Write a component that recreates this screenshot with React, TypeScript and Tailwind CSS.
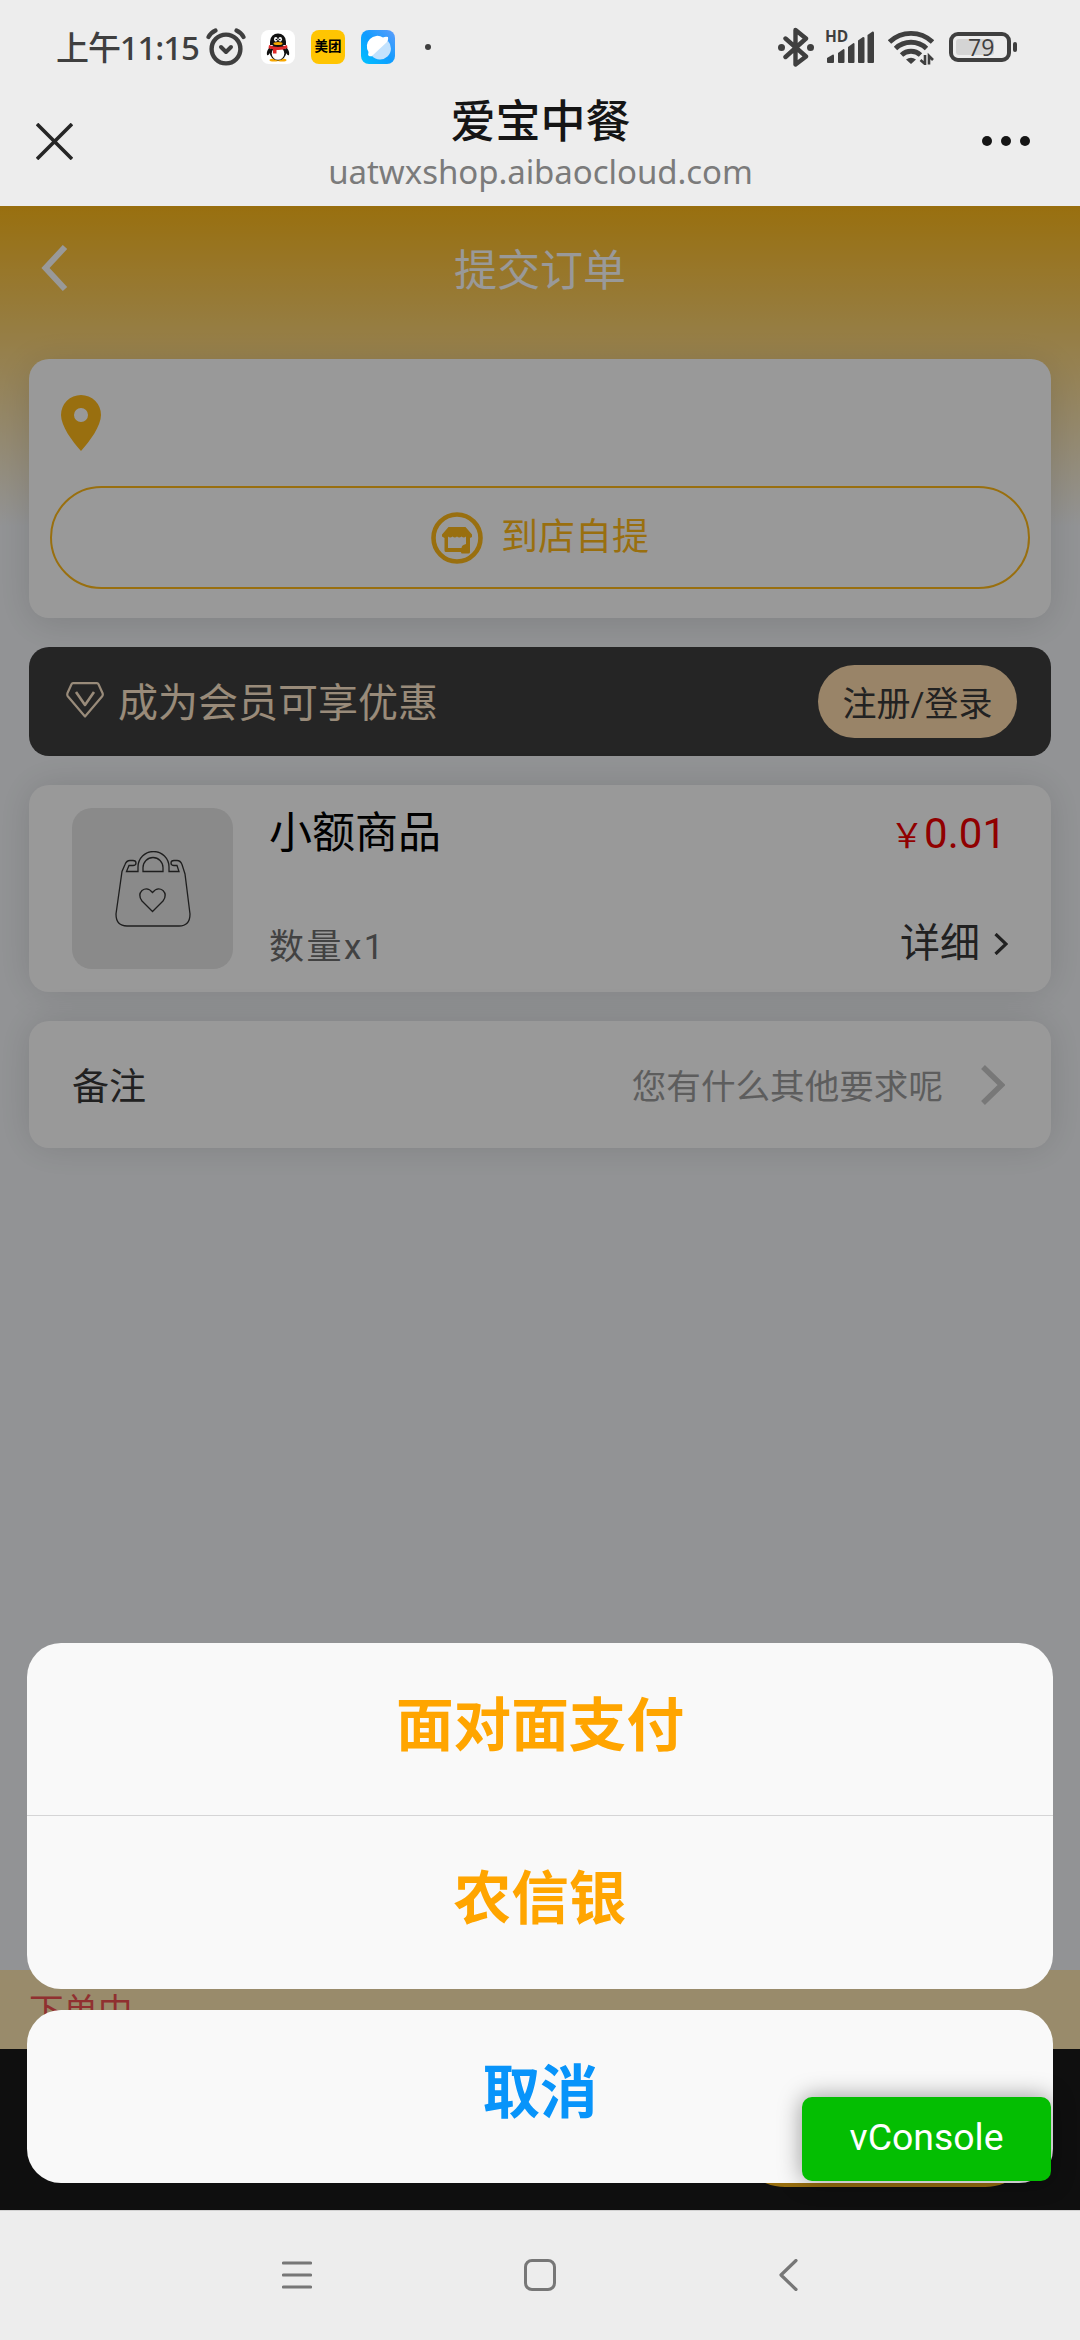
import React from "react";

const Alarm = () => (
  <svg className="w-10 h-[38px]" viewBox="0 0 40 38" fill="none" stroke="#3f3f3f" strokeLinecap="round">
    <circle cx="20" cy="21" r="14.4" strokeWidth="4.4" />
    <path d="M15 19l5 5 5-5" strokeWidth="4" strokeLinejoin="round" />
    <path d="M2.500 9Q5 4.500 9.500 2.500M37.500 9Q35 4.500 30.500 2.500" strokeWidth="4.2" />
  </svg>
);

const Penguin = () => (
  <svg className="w-[34px] h-[34px]" viewBox="0 0 34 34">
    <rect width="34" height="34" rx="8" fill="#fff" />
    <ellipse cx="13" cy="30" rx="4.500" ry="1.600" fill="#f7a800" />
    <ellipse cx="21" cy="30" rx="4.500" ry="1.600" fill="#f7a800" />
    <path d="M9 17q-4 4-3 8 1 1 3-2zM25 17q4 4 3 8-1 1-3-2z" fill="#111" />
    <ellipse cx="17" cy="22" rx="8.300" ry="8.500" fill="#111" />
    <ellipse cx="17" cy="23.500" rx="6.300" ry="6.300" fill="#fff" />
    <path d="M9 15V11.500a8 8 0 0 1 16 0V15z" fill="#111" />
    <ellipse cx="14.800" cy="9.300" rx="1.800" ry="2.400" fill="#fff" />
    <ellipse cx="19.200" cy="9.300" rx="1.800" ry="2.400" fill="#fff" />
    <circle cx="15.300" cy="9.500" r=".8" />
    <circle cx="18.800" cy="9.500" r=".8" />
    <ellipse cx="17" cy="13.600" rx="4.500" ry="1.500" fill="#f7a800" />
    <path d="M8 15q9 4 18 0l.5 3q-5 2.500-11 2v3.500h-3.500v-4.200l-4.500-1z" fill="#e02a2a" />
  </svg>
);

const Browser = () => (
  <svg className="w-[34px] h-[34px]" viewBox="0 0 34 34">
    <defs>
      <linearGradient id="browser" x1="0" y1="1" x2="1" y2="0">
        <stop offset="0" stopColor="#00c3ff" />
        <stop offset=".5" stopColor="#109cff" />
        <stop offset="1" stopColor="#5f9dfb" />
      </linearGradient>
    </defs>
    <rect width="34" height="34" rx="8" fill="url(#browser)" />
    <path d="M27 7q-3-.5-5 .5A10.500 10.500 0 0 0 7.500 22q-1 3 .5 4 2 .8 4-.2A10.500 10.500 0 0 0 26.500 12q1-3 .5-5z" fill="#fff" />
    <path d="M27 11A10.500 10.500 0 0 1 11 26z" fill="#c3e2fd" />
  </svg>
);

const Bluetooth = () => (
  <svg className="w-9 h-10" viewBox="0 0 36 40" fill="none" stroke="#3f3f3f" strokeWidth="4.400" strokeLinecap="round" strokeLinejoin="round">
    <path d="M7.500 11.500L28 29.500 17.500 37.500V3L28 11.500 7.500 30" />
    <circle cx="3.500" cy="20.500" r="3.500" fill="#3f3f3f" stroke="none" />
    <circle cx="32.500" cy="20.500" r="3.500" fill="#3f3f3f" stroke="none" />
  </svg>
);

const Signal = () => (
  <div className="relative w-[50px] h-[34px]">
    <span className="absolute left-0 -top-[2px] text-[15.5px] leading-[17px] font-bold font-['Open_Sans',sans-serif] text-[#3f3f3f]">HD</span>
    <svg className="w-[50px] h-[34px]" viewBox="0 0 50 34" fill="#3f3f3f">
      <path d="M2 28l6-3.500q1 0 1 1V32q0 1-1 1H3q-1 0-1-1z" />
      <path d="M13 23l5.500-4q1 0 1 1V32q0 1-1 1H14q-1 0-1-1z" />
      <path d="M23 17l5.500-4q1 0 1 1V32q0 1-1 1H24q-1 0-1-1z" />
      <path d="M33 10.500l5-3.500q1.500 0 1.500 1V32q0 1-1 1H34q-1 0-1-1z" />
      <path d="M42.500 5l5-3.500q1.500 0 1.500 1V32q0 1-1 1h-4.500q-1 0-1-1z" />
    </svg>
  </div>
);

const Wifi = () => (
  <svg className="w-[46px] h-9" viewBox="0 0 46 36" fill="none" stroke="#3f3f3f" strokeWidth="4.900">
    <path d="M1.500 13a31 31 0 0 1 43 0" />
    <path d="M7.500 19.500a22.500 22.500 0 0 1 31 0" />
    <path d="M13.500 26a14 14 0 0 1 19 0" />
    <path d="M18 30.500q5-3.500 10 0L23 35z" fill="#3f3f3f" stroke="none" />
    <path d="M37.200 26v9.500l-5-4.500M40.800 35.500V26.500l4.500 4.500" stroke="#ededed" strokeWidth="5" />
    <path d="M37 26v9l-4.500-4M41 35.500V27l4 4" strokeWidth="2.600" />
  </svg>
);

const Battery = () => (
  <div className="flex items-center gap-[2px]">
    <div className="w-[62px] h-[30px] border-4 border-[#3f3f3f] rounded-[9px] p-[3px] bg-[#ededed]">
      <div className="w-[38px] h-4 rounded-[3px] bg-[#d4d4d4] text-center">
        <span className="block pl-3 text-[23px] leading-4 font-medium font-['Open_Sans',sans-serif] text-[#3f3f3f]">79</span>
      </div>
    </div>
    <div className="w-1 h-[10px] rounded-full bg-[#3f3f3f]" />
  </div>
);

const StatusBar = () => (
  <div className="h-[94px] flex items-center pl-[56px] pr-[63px]">
    <span className="w-[150px] whitespace-nowrap text-[33px] leading-none tracking-[-1.1px] font-medium text-[#3f3f3f] font-['Noto_Sans','Noto_Sans_CJK_SC',sans-serif]">
      上午11:15
    </span>
    <Alarm />
    <div className="flex items-center gap-4 ml-[15px]">
      <Penguin />
      <div className="w-[34px] h-[34px] rounded-lg bg-[#ffc502] flex items-center justify-center text-[13.5px] leading-none font-bold text-black">
        美团
      </div>
      <Browser />
    </div>
    <div className="w-[6px] h-[6px] ml-[30px] rounded-full bg-[#3f3f3f]" />
    <div className="flex items-center ml-auto">
      <Bluetooth />
      <div className="ml-[11px]">
        <Signal />
      </div>
      <div className="ml-[13px]">
        <Wifi />
      </div>
      <div className="ml-[15px]">
        <Battery />
      </div>
    </div>
  </div>
);

const TitleBar = () => (
  <div className="h-28 px-9 flex items-center justify-between">
    <svg className="w-[37px] h-[37px] mb-[18px]" viewBox="0 0 37 37" stroke="#262626" strokeWidth="3.600">
      <path d="M1 1l35 35M36 1L1 36" />
    </svg>
    <div className="flex flex-col items-center pb-[4px]">
      <h1 className="text-[45px] leading-[52px] font-medium text-[#151515]">爱宝中餐</h1>
      <p className="h-[50px] text-[33px] leading-[46px] tracking-[-0.05px] text-[#7b7b7b] font-['Noto_Sans',sans-serif]">
        uatwxshop.aibaocloud.com
      </p>
    </div>
    <div className="flex gap-[9px] mr-[14px] mb-[18px] -ml-[26px]">
      <i className="w-[10px] h-[10px] rounded-full bg-[#151515]" />
      <i className="w-[10px] h-[10px] rounded-full bg-[#151515]" />
      <i className="w-[10px] h-[10px] rounded-full bg-[#151515]" />
    </div>
  </div>
);

const StoreIcon = () => (
  <svg className="w-[52px] h-[52px]" viewBox="0 0 52 52">
    <circle cx="26" cy="26" r="23.500" fill="none" stroke="#ffba19" strokeWidth="4.600" />
    <path
      fillRule="evenodd"
      fill="#ffba19"
      d="M17.500 15h17L41 22.500v2.500l-2 1v14q0 1.500-1.500 1.500H31q-1 0-1-1.500H15q-1.500 0-1.500-1.500V26l-2.500-1.500v-2zM17 24.500V36h13.500q0-3 4.500-4V24.500q-2.200 1.800-4.500 0-2.200 1.800-4.500 0-2.200 1.800-4.500 0-2.200 1.800-4.500 0z"
    />
  </svg>
);

const PickupCard = () => (
  <section className="h-[259px] rounded-[20px] bg-white pt-9 px-[21px] shadow-[0_6px_36px_rgba(0,0,0,0.12)]">
    <svg className="w-10 h-14 ml-[11px]" viewBox="0 0 40 56" fill="#ffba19">
      <path
        fillRule="evenodd"
        d="M20 0a20 20 0 0 1 20 20C40 31 29 46 20 56 11 46 0 31 0 20A20 20 0 0 1 20 0zm0 13a7 7 0 1 0 0 14 7 7 0 0 0 0-14z"
      />
    </svg>
    <button className="mt-[35px] w-full h-[103px] rounded-full border-2 border-[#ffba19] flex items-center justify-center gap-[18px]">
      <StoreIcon />
      <span className="text-[37px] leading-none text-[#ffba19]">到店自提</span>
    </button>
  </section>
);

const MemberBar = () => (
  <section className="h-[109px] mt-[29px] rounded-[20px] bg-[#3e3e3e] flex items-center pl-[37px] pr-[34px]">
    <svg className="w-[38px] h-9 mb-1" viewBox="0 0 38 36" fill="none" stroke="#ffe8cb" strokeWidth="2.200" strokeLinejoin="round">
      <path d="M7 1.200h24q1 0 1.500 1L36.500 11q.8 2-.5 3.500L19 34.500 2 14.500Q.8 13 1.500 11L5.500 2.200q.5-1 1.500-1z" />
      <path d="M10 10l9 13 9-13" strokeWidth="2.600" />
    </svg>
    <span className="ml-[14px] pt-[5px] text-[40px] leading-none text-[#ffe8cb]">成为会员可享优惠</span>
    <button className="ml-auto w-[199px] h-[73px] rounded-full bg-[#ffdcad] text-[34px] leading-none text-[#3a3a3a] pt-[5px]">
      注册/登录
    </button>
  </section>
);

const Bag = () => (
  <svg className="w-[76px] h-[76px]" viewBox="0 0 76 76" fill="none" stroke="#333" strokeWidth="1.300">
    <path d="M23 20.500V16a15.500 15.500 0 0 1 31 0v4.500h10l-2-6h-3q-3 0-3-2.500T59 9.500h3q3.500 0 5 4l3 9.500 5 40q0 12-11 12H12Q1 75 1 63L7 20.500l3-7q1.500-4 5-4h3q3 0 3 2.500t-3 2.500h-4l-2.500 6z" />
    <path d="M28 20.500V16.500a10 10 0 0 1 20 0v4z" />
    <path d="M37.500 60.500L27 50q-4.500-6 0-10.500 5.500-4 10.500 2 5-6 10.500-2 4.500 4.500 0 10.500z" />
  </svg>
);

const ItemCard = () => (
  <section className="h-[207px] mt-[29px] rounded-[20px] bg-white flex pt-[23px] pl-[43px] pr-[43px] shadow-[0_0_36px_rgba(0,0,0,0.12)]">
    <div className="w-[161px] h-[161px] rounded-[20px] bg-[#e6e6e6] flex items-center justify-center">
      <Bag />
    </div>
    <div className="ml-9 flex flex-col">
      <h2 className="h-[117px] text-[43px] leading-[50px] text-black">小额商品</h2>
      <p className="text-[35px] leading-[46px] tracking-[2.500px] text-[#6e6e6e]">数量x1</p>
    </div>
    <div className="ml-auto flex flex-col items-end">
      <p className="h-[109px] mr-[2px] leading-[52px] text-[#f00000] whitespace-nowrap">
        <span className="text-[34px]">￥</span>
        <span className="text-[42px]">0.01</span>
      </p>
      <p className="flex items-center gap-[14px] text-[40px] leading-[54px] text-[#373737]">
        详细
        <svg className="w-[14px] h-[22px]" viewBox="0 0 14 22" fill="none" stroke="#373737" strokeWidth="3.200">
          <path d="M1.500 1L12 11 1.500 21" />
        </svg>
      </p>
    </div>
  </section>
);

const NoteCard = () => (
  <section className="h-[127px] mt-[29px] rounded-[20px] bg-white flex items-center pl-[43px] pr-[46px] shadow-[0_0_36px_rgba(0,0,0,0.12)]">
    <span className="pt-[5px] text-[37px] leading-none text-[#373737]">备注</span>
    <span className="ml-auto pt-[5px] text-[34.6px] leading-none text-[#9c9c9c]">您有什么其他要求呢</span>
    <svg className="w-6 h-10 ml-[38px]" viewBox="0 0 24 40" fill="none" stroke="#c8c8c8" strokeWidth="5.500">
      <path d="M2 2l18.500 18L2 38" />
    </svg>
  </section>
);

const ActionSheet = () => (
  <div className="absolute inset-0 flex flex-col justify-end px-[27px] pb-[27px]">
    <div className="rounded-[34px] bg-[#f9f9f9] text-[57.6px] leading-[168px] font-bold text-[#ffa500] text-center">
      <button className="block w-full h-[173px] pb-[5px] border-b border-[#d5d5d6]">面对面支付</button>
      <button className="block w-full h-[173px] pb-[5px]">农信银</button>
    </div>
    <button className="mt-[21px] h-[173px] pb-[5px] rounded-[34px] bg-[#f9f9f9] text-[57.6px] leading-[168px] font-bold text-[#0894fa]">
      取消
    </button>
  </div>
);

const NavBar = () => (
  <nav className="h-[130px] bg-[#ededed] border-t border-[#d2d2d2] flex items-center px-[282px] pb-[2px] justify-between">
    <svg className="w-[30px] h-8" viewBox="0 0 30 32" stroke="#777" strokeWidth="3.200" strokeLinecap="round">
      <path d="M1.500 4h27M1.500 16h27M1.500 28h27" />
    </svg>
    <div className="w-8 h-8 mr-[10px] rounded-[8px] border-[3.5px] border-[#777]" />
    <svg className="w-5 h-8" viewBox="0 0 20 32" fill="none" stroke="#777" strokeWidth="3.200" strokeLinecap="round" strokeLinejoin="round">
      <path d="M18 1.500L3 16l15 14.500" />
    </svg>
  </nav>
);

const App = () => {
  return (
    <div className="w-[1080px] h-[2340px] flex flex-col overflow-hidden bg-[#ededed] font-[Roboto,'Noto_Sans_CJK_SC',sans-serif]">
      <StatusBar />
      <TitleBar />

      {/* Page content */}
      <main className="relative flex-1 flex flex-col bg-[#f4f6f9] bg-[linear-gradient(180deg,#ffba19_0px,#f4f6f9_320px)]">
        <header className="h-[153px] px-[41px] pb-7 flex items-center">
          <svg className="w-[27px] h-[46px] mb-[2px]" viewBox="0 0 27 46" fill="none" stroke="#fff" strokeWidth="6">
            <path d="M24 2L4.500 23 24 44" />
          </svg>
          <h2 className="flex-1 pr-[27px] text-center text-[43px] leading-none text-white pt-[5px]">提交订单</h2>
        </header>

        <div className="px-[29px]">
          <PickupCard />
          <MemberBar />
          <ItemCard />
          <NoteCard />
        </div>

        <footer className="mt-auto">
          <div className="h-[79px] pl-[29px] pt-[18px] bg-[#ffe8b2] text-[34.500px] leading-[46px] text-[#f05050]">下单中</div>
          <div className="h-[161px] bg-[#191919] flex justify-end items-end pr-[45px] pb-[23px]">
            <div className="w-[300px] h-[100px] rounded-full bg-[#ffba19]" />
          </div>
        </footer>

        {/* Mask */}
        <div className="absolute inset-0 bg-black/40" />
        <ActionSheet />
        <button className="absolute right-[29px] bottom-[29px] w-[249px] h-[84px] pb-[2px] rounded-[10px] bg-[#04be02] text-white text-[37.400px] leading-none shadow-[0_0_23px_rgba(0,0,0,0.4)]">
          vConsole
        </button>
      </main>

      <NavBar />
    </div>
  );
};

export default App;
